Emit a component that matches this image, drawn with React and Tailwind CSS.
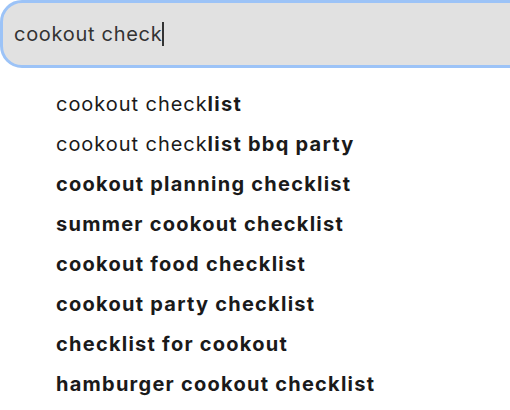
const SUGGESTIONS = [
  [['cookout check', false], ['list', true]],
  [['cookout check', false], ['list bbq party', true]],
  [['cookout planning checklist', true]],
  [['summer cookout checklist', true]],
  [['cookout food checklist', true]],
  [['cookout party checklist', true]],
  [['checklist for cookout', true]],
  [['hamburger cookout checklist', true]],
]

export default function App() {
  return (
    <div
      className="w-[510px] h-[410px] overflow-hidden bg-white"
      style={{ fontFamily: 'Inter, "Noto Sans", sans-serif' }}
    >
      <div className="w-[540px] h-[68px] rounded-l-[22px] border-[3px] border-[#9cc3f7] bg-[#e1e1e1] flex items-center pl-[11px]">
        <span className="text-[20px] text-[#333] leading-none tracking-[0.7px]">cookout check</span>
        <span className="w-[2px] h-[24px] bg-[#333]" />
      </div>
      <ul className="pl-[56px] pt-[16px]">
        {SUGGESTIONS.map((parts, i) => (
          <li key={i} className="h-[40px] flex items-center text-[20px] text-[#1a1a1a]">
            <span>
              {parts.map(([t, b], j) => (
                <span
                  key={j}
                  className={b ? 'font-bold tracking-[1.25px]' : 'font-normal tracking-[0.95px]'}
                >
                  {t}
                </span>
              ))}
            </span>
          </li>
        ))}
      </ul>
    </div>
  )
}
